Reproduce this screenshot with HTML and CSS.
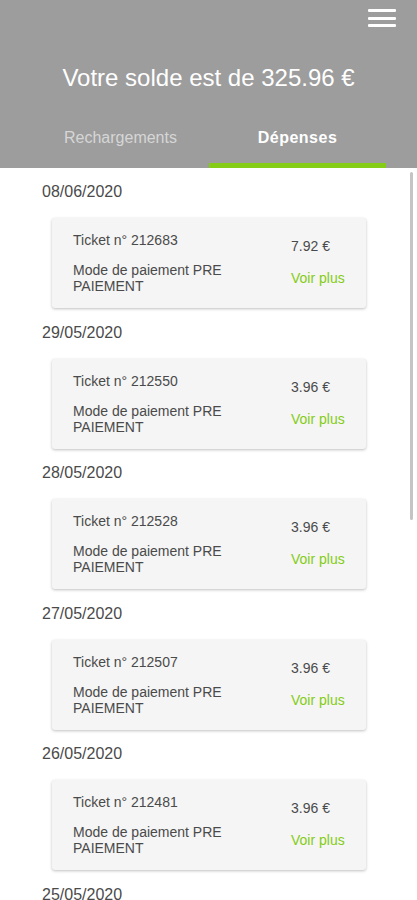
FILE: index.html
```html
<!DOCTYPE html>
<html lang="fr">
<head>
<meta charset="utf-8">
<title>Solde</title>
<link rel="stylesheet" href="styles.css">
</head>
<body>
<div class="app">
  <header class="header">
    <div class="topbar">
      <button class="menu" aria-label="Menu"><span></span><span></span><span></span></button>
    </div>
    <h1 class="balance">Votre solde est de 325.96 €</h1>
    <nav class="tabs">
      <div class="tab">Rechargements</div>
      <div class="tab active">Dépenses</div>
    </nav>
  </header>
  <main class="list">
    <div class="scrollbar"></div>
    <section class="day">
      <div class="date">08/06/2020</div>
      <div class="card">
        <div class="left"><div class="ticket">Ticket n° 212683</div><div class="mode">Mode de paiement PRE PAIEMENT</div></div>
        <div class="right"><div class="amount">7.92 €</div><div class="more">Voir plus</div></div>
      </div>
    </section>
    <section class="day">
      <div class="date">29/05/2020</div>
      <div class="card">
        <div class="left"><div class="ticket">Ticket n° 212550</div><div class="mode">Mode de paiement PRE PAIEMENT</div></div>
        <div class="right"><div class="amount">3.96 €</div><div class="more">Voir plus</div></div>
      </div>
    </section>
    <section class="day">
      <div class="date">28/05/2020</div>
      <div class="card">
        <div class="left"><div class="ticket">Ticket n° 212528</div><div class="mode">Mode de paiement PRE PAIEMENT</div></div>
        <div class="right"><div class="amount">3.96 €</div><div class="more">Voir plus</div></div>
      </div>
    </section>
    <section class="day">
      <div class="date">27/05/2020</div>
      <div class="card">
        <div class="left"><div class="ticket">Ticket n° 212507</div><div class="mode">Mode de paiement PRE PAIEMENT</div></div>
        <div class="right"><div class="amount">3.96 €</div><div class="more">Voir plus</div></div>
      </div>
    </section>
    <section class="day">
      <div class="date">26/05/2020</div>
      <div class="card">
        <div class="left"><div class="ticket">Ticket n° 212481</div><div class="mode">Mode de paiement PRE PAIEMENT</div></div>
        <div class="right"><div class="amount">3.96 €</div><div class="more">Voir plus</div></div>
      </div>
    </section>
    <section class="day">
      <div class="date">25/05/2020</div>
    </section>
  </main>
</div>
</body>
</html>
```

FILE: styles.css
```css
html, body {
  margin: 0;
  padding: 0;
  background: #ffffff;
  font-family: "Liberation Sans", Arial, sans-serif;
}
.app {
  width: 417px;
  height: 900px;
  overflow: hidden;
}
.header {
  background: #9d9d9d;
  height: 168px;
  display: flex;
  flex-direction: column;
}
.topbar {
  display: flex;
  justify-content: flex-end;
  padding: 9px 21px 0 0;
  height: 20px;
}
.menu {
  width: 28px;
  height: 18px;
  padding: 0;
  border: 0;
  background: none;
  display: flex;
  flex-direction: column;
  justify-content: space-between;
}
.menu span {
  display: block;
  width: 28px;
  height: 3px;
  background: #ffffff;
  border-radius: 1px;
}
.balance {
  margin: 35px 0 0 0;
  text-align: center;
  color: #ffffff;
  font-weight: normal;
  font-size: 24px;
  line-height: 28px;
}
.tabs {
  margin: 37px 31px 0 32px;
  display: grid;
  grid-template-columns: 1fr 1fr;
}
.tab {
  text-align: center;
  font-size: 16px;
  line-height: 18px;
  color: #d6d6d6;
  padding-bottom: 16px;
  border-bottom: 5px solid transparent;
}
.tab.active {
  color: #ffffff;
  font-weight: bold;
  letter-spacing: 0.5px;
  border-bottom-color: #84cc16;
}
.list {
  position: relative;
  padding: 14px 0 0 42px;
}
.scrollbar {
  position: absolute;
  left: 410px;
  top: 4px;
  width: 3px;
  height: 348px;
  background: #c4c4c4;
  border-radius: 2px;
}
.day {
  margin-bottom: 14.6px;
}
.date {
  font-size: 16px;
  line-height: 20px;
  color: #4a4a4a;
}
.card {
  margin: 16px 0 0 10px;
  width: 314px;
  height: 90px;
  box-sizing: border-box;
  background: #f5f5f5;
  border-radius: 3px;
  box-shadow: 0 1px 3px rgba(0,0,0,0.25);
  padding: 14px 0 14px 21px;
  display: grid;
  grid-template-columns: 218px 1fr;
  font-size: 14px;
  line-height: 16px;
  color: #4a4a4a;
}
.ticket {
  margin-bottom: 14px;
}
.mode {
  width: 165px;
}
.right {
  padding-top: 6px;
}
.amount {
  margin-bottom: 16px;
}
.more {
  color: #84cc16;
}
```
